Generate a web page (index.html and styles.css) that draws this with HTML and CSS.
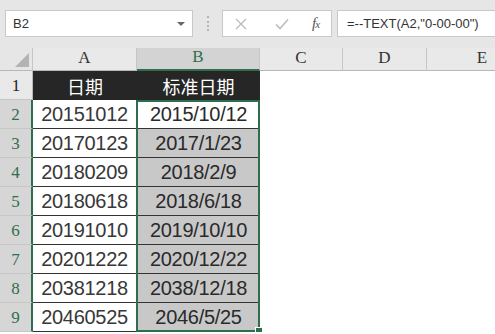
FILE: index.html
```html
<!DOCTYPE html>
<html lang="zh-CN">
<head>
    <meta charset="UTF-8">
    <title>标准日期</title>
    <link rel="stylesheet" href="styles.css">
</head>
<body>

    <div class="formula-bar">
        <div class="name-box">
            <span>B2</span>
            <span class="drop"></span>
        </div>
        <div class="grip"></div>
        <div class="buttons">
            <svg class="icon" width="14" height="14" viewBox="0 0 14 14">
                <path d="M2 2 L12 12 M12 2 L2 12" stroke="#bdbdbd" stroke-width="1.4" fill="none"/>
            </svg>
            <svg class="icon" width="16" height="14" viewBox="0 0 16 14">
                <path d="M2 7.5 L6 11.5 L14 2.5" stroke="#bdbdbd" stroke-width="1.6" fill="none"/>
            </svg>
            <span class="fx"><i>f</i><i class="x">x</i></span>
        </div>
        <div class="formula">=--TEXT(A2,"0-00-00")</div>
    </div>

    <div class="sheet">
        <div class="corner"><span class="tri"></span></div>
        <div class="ch">A</div>
        <div class="ch sel">B</div>
        <div class="ch">C</div>
        <div class="ch">D</div>
        <div class="ch last">E</div>

        <div class="rh">1</div>
        <div class="cell hd">日期</div>
        <div class="cell hd">标准日期</div>
        <div class="cell"></div>
        <div class="cell"></div>
        <div class="cell"></div>

        <div class="rh sel">2</div>
        <div class="cell a">20151012</div>
        <div class="cell b active">2015/10/12</div>
        <div class="cell"></div>
        <div class="cell"></div>
        <div class="cell"></div>

        <div class="rh sel">3</div>
        <div class="cell a">20170123</div>
        <div class="cell b">2017/1/23</div>
        <div class="cell"></div>
        <div class="cell"></div>
        <div class="cell"></div>

        <div class="rh sel">4</div>
        <div class="cell a">20180209</div>
        <div class="cell b">2018/2/9</div>
        <div class="cell"></div>
        <div class="cell"></div>
        <div class="cell"></div>

        <div class="rh sel">5</div>
        <div class="cell a">20180618</div>
        <div class="cell b">2018/6/18</div>
        <div class="cell"></div>
        <div class="cell"></div>
        <div class="cell"></div>

        <div class="rh sel">6</div>
        <div class="cell a">20191010</div>
        <div class="cell b">2019/10/10</div>
        <div class="cell"></div>
        <div class="cell"></div>
        <div class="cell"></div>

        <div class="rh sel">7</div>
        <div class="cell a">20201222</div>
        <div class="cell b">2020/12/22</div>
        <div class="cell"></div>
        <div class="cell"></div>
        <div class="cell"></div>

        <div class="rh sel">8</div>
        <div class="cell a">20381218</div>
        <div class="cell b">2038/12/18</div>
        <div class="cell"></div>
        <div class="cell"></div>
        <div class="cell"></div>

        <div class="rh sel">9</div>
        <div class="cell a">20460525</div>
        <div class="cell b">2046/5/25</div>
        <div class="cell"></div>
        <div class="cell"></div>
        <div class="cell"></div>

        <!-- selection outline over B2:B9 -->
        <div class="selection"><span class="handle"></span></div>
    </div>

</body>
</html>
```

FILE: styles.css
```css
body {
    margin: 0;
    background: #ffffff;
    font-family: "Liberation Sans", Arial, "Noto Sans CJK SC", sans-serif;
    overflow: hidden;
}
.formula-bar {
    height: 48px;
    background: #e6e6e6;
    display: flex;
    align-items: flex-start;
    padding: 10px 0 0 5px;
    box-sizing: border-box;
}
.name-box,
.buttons,
.formula {
    height: 27px;
    background: #ffffff;
    border: 1px solid #c9c9c9;
    box-sizing: border-box;
    display: flex;
    align-items: center;
}
.name-box {
    width: 188px;
    padding: 0 7px;
    justify-content: space-between;
    font-size: 13px;
    color: #333;
}
.drop {
    width: 0;
    height: 0;
    border-left: 4px solid transparent;
    border-right: 4px solid transparent;
    border-top: 4px solid #666;
    margin-top: 1px;
}
.grip {
    width: 0;
    height: 15px;
    margin: 6px 13px 0 14px;
    border-left: 2px dotted #b4b4b4;
}
.buttons {
    width: 110px;
    padding: 0 0 0 11px;
}
.buttons .icon {
    margin-right: 26px;
}
.buttons .icon + .icon {
    margin-right: 22px;
}
.fx {
    font-family: "Liberation Serif", serif;
    font-size: 15px;
    color: #555;
}
.fx .x {
    font-size: 11px;
    margin-left: -1px;
}
.formula {
    flex: 1;
    margin-left: 5px;
    border-right: none;
    padding-left: 9px;
    font-size: 13px;
    color: #333;
}

.sheet {
    display: grid;
    grid-template-columns: 33px 104px 123px 83px 84px 110px;
    grid-template-rows: 23px repeat(9, 29px);
    width: max-content;
    position: relative;
}
.corner {
    background: #e6e6e6;
    border-right: 1px solid #c6c6c6;
    border-bottom: 1px solid #b8b8b8;
    position: relative;
}
.tri {
    position: absolute;
    right: 3px;
    bottom: 3px;
    width: 0;
    height: 0;
    border-left: 14px solid transparent;
    border-bottom: 14px solid #b3b3b3;
}
.ch {
    background: #e9e9e9;
    border-right: 1px solid #c6c6c6;
    border-bottom: 1px solid #b8b8b8;
    box-sizing: border-box;
    display: flex;
    align-items: flex-end;
    justify-content: center;
    padding-bottom: 2px;
    font-family: "Liberation Serif", serif;
    font-size: 17px;
    color: #333;
}
.ch.sel {
    background: #d3d3d3;
    border-bottom: 2px solid #2f6e4d;
    color: #2f6e4d;
}
.ch.last {
    border-right: none;
}
.rh {
    background: #e9e9e9;
    border-right: 1px solid #b8b8b8;
    border-bottom: 1px solid #c6c6c6;
    box-sizing: border-box;
    display: flex;
    align-items: flex-end;
    justify-content: center;
    padding-bottom: 3px;
    font-family: "Liberation Serif", serif;
    font-size: 17px;
    color: #222;
}
.rh.sel {
    background: #d6d6d6;
    border-right: 2px solid #2f6e4d;
    color: #2f6e4d;
}
.cell {
    box-sizing: border-box;
    display: flex;
    align-items: center;
    justify-content: center;
    font-size: 20px;
    letter-spacing: -0.3px;
    color: #383838;
}
.cell.hd {
    background: #262626;
    color: #ffffff;
    font-family: "Noto Sans CJK SC", sans-serif;
    font-size: 18px;
    letter-spacing: 0;
}
.cell.a {
    background: #ffffff;
    border-right: 1px solid #333;
    border-bottom: 1px solid #333;
}
.cell.b {
    background: #c8c8c8;
    border-bottom: 1px solid #333;
    color: #2a2a2a;
}
.cell.b.active {
    background: #ffffff;
}
.selection {
    position: absolute;
    left: 136px;
    top: 52px;
    width: 124px;
    height: 232px;
    box-sizing: border-box;
    border: 2px solid #2f6e4d;
    pointer-events: none;
}
.handle {
    position: absolute;
    right: -5px;
    bottom: -5px;
    width: 6px;
    height: 6px;
    background: #2f6e4d;
    border: 1px solid #ffffff;
}
```
